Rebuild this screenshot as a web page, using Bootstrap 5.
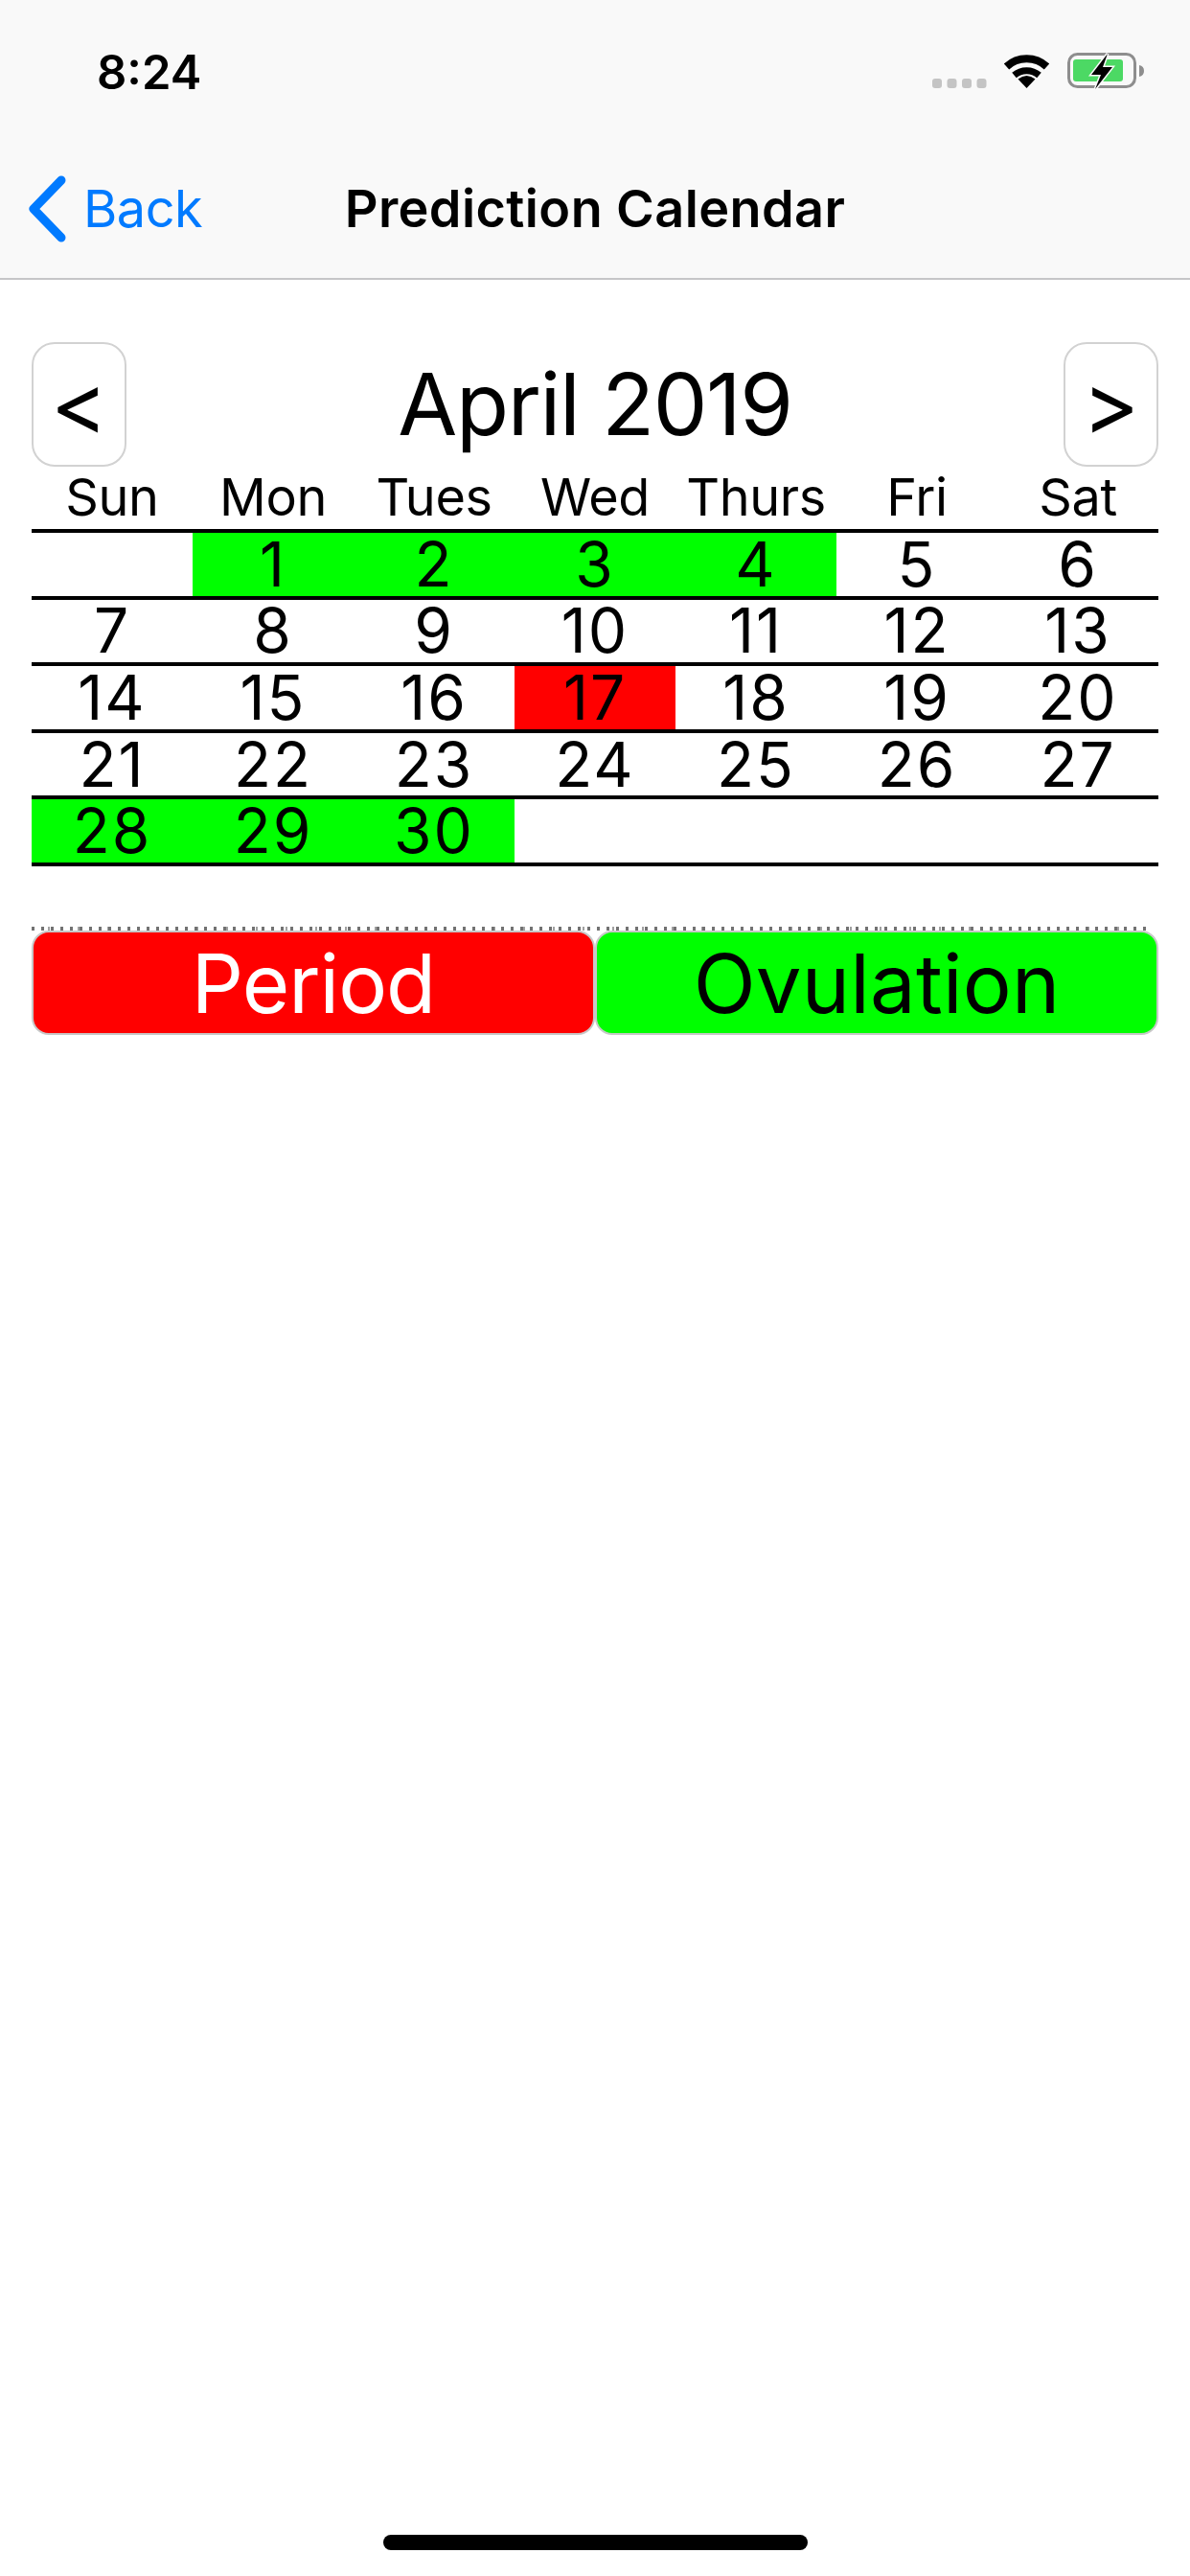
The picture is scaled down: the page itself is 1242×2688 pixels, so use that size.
<!DOCTYPE html>
<html lang="en">
<head>
<meta charset="utf-8">
<title>Prediction Calendar</title>
<link rel="stylesheet" href="https://cdn.jsdelivr.net/npm/bootstrap@5.3.0/dist/css/bootstrap.min.css">
<style>
html, body { background:#fff; }
body { font-family:"Inter","Liberation Sans",sans-serif; color:#000; width:1242px; height:2688px; overflow:hidden; }
.top-bar { background:#f9f9f9; border-bottom:2px solid #c6c6c8; height:292px; }
.status-row { height:132px; padding:0 47px 0 101px; }
.clock { font-size:49px; font-weight:600; line-height:1; margin-top:18px; }
.title-row { height:159px; grid-template-columns:1fr auto 1fr; padding:6px 29px 0; }
.back-link { color:#007aff; font-size:54px; text-decoration:none; line-height:1; gap:17px; letter-spacing:-.5px; margin-top:6px; }
.title-text { font-size:54px; font-weight:600; line-height:1; letter-spacing:.4px; margin:6px 0 0; }
.page-body { padding:65px 33px 0; }
.month-row { height:129px; }
.month-name { font-size:90px; line-height:1; margin:0; letter-spacing:-1.4px; }
.step-btn { width:99px; height:130px; border:2px solid #d2d2d2; border-radius:24px; background:#fff; font-size:90px; line-height:1; color:#000; padding:0 0 2px; }
.cal-grid { width:1176px; table-layout:fixed; border-collapse:collapse; text-align:center; }
.cal-grid th { font-weight:400; font-size:54px; line-height:60px; height:68px; padding:0; border-bottom:4px solid #000; letter-spacing:-.4px; }
.cal-grid td { font-size:64px; line-height:60px; height:69.6px; padding:0; border-bottom:4px solid #000; letter-spacing:2px; }
.fill-green { background:#0f0; }
.fill-red { background:#f00; }
.legend-wrap { margin-top:63px; }
.cut-text { height:4px; margin-right:12px; opacity:.55; background-image:repeating-linear-gradient(90deg,#000 0 3px,transparent 3px 10px),repeating-linear-gradient(90deg,transparent 0 17px,#555 17px 19px,transparent 19px 31px); }
.legend-pill { flex:1 1 0; height:109px; font-size:85px; line-height:1; border-radius:18px; border:2px solid #c8c8c8; padding:3px 0 0; }
.legend-red { background:#f00; color:#fff; letter-spacing:-1px; }
.legend-green { background:#0f0; color:#000; letter-spacing:.2px; }
.home-bar { width:443px; height:16px; background:#000; border-radius:8px; position:absolute; left:400px; top:2645px; }
</style>
</head>
<body>
<header class="top-bar">
  <div class="status-row d-flex justify-content-between align-items-center">
    <span class="clock">8:24</span>
    <svg width="222" height="40" viewBox="0 0 222 40" class="mt-3" aria-label="status icons">
      <g fill="#c4c4c4"><rect x="0" y="28" width="10" height="10" rx="3"/><rect x="15.5" y="28" width="10" height="10" rx="3"/><rect x="31" y="28" width="10" height="10" rx="3"/><rect x="46.5" y="28" width="10" height="10" rx="3"/></g>
      <g transform="translate(74 1)" fill="none" stroke="#000">
        <path d="M3.5 14.5 A31 31 0 0 1 45.5 14.5" stroke-width="8"/>
        <path d="M11.5 23.5 A20 20 0 0 1 37.5 23.5" stroke-width="7"/>
        <path d="M24.5 37 L15.5 27.5 Q24.5 20.5 33.5 27.5 Z" fill="#000" stroke="none"/>
      </g>
      <g transform="translate(141 1)">
        <rect x="1.5" y="1.5" width="69" height="34" rx="9" fill="none" stroke="#8e8e8e" stroke-width="3"/>
        <path d="M75 13 a6 6 0 0 1 5 6 a6 6 0 0 1 -5 6 Z" fill="#8e8e8e"/>
        <rect x="6" y="7" width="52" height="23" rx="3" fill="#4cd964"/>
        <path d="M42 1 L25 23 L35 23 L29 38 L47 15 L37 15 Z" fill="#000" stroke="#f9f9f9" stroke-width="3" stroke-linejoin="miter" paint-order="stroke"/>
      </g>
    </svg>
  </div>
  <div class="title-row d-grid align-items-center">
    <a class="back-link d-inline-flex align-items-center justify-self-start" href="#">
      <svg width="41" height="70" viewBox="0 0 41 70" aria-hidden="true"><path d="M35 5 L6 35 L35 65" fill="none" stroke="#007aff" stroke-width="9" stroke-linecap="round" stroke-linejoin="round"/></svg>
      <span>Back</span>
    </a>
    <h1 class="title-text">Prediction Calendar</h1>
    <span></span>
  </div>
</header>
<main class="page-body">
  <div class="month-row d-flex justify-content-between align-items-center">
    <button type="button" class="step-btn">&lt;</button>
    <h2 class="month-name fw-normal">April 2019</h2>
    <button type="button" class="step-btn">&gt;</button>
  </div>
  <table class="cal-grid">
    <thead><tr><th>Sun</th><th>Mon</th><th>Tues</th><th>Wed</th><th>Thurs</th><th>Fri</th><th>Sat</th></tr></thead>
    <tbody>
      <tr><td></td><td class="fill-green">1</td><td class="fill-green">2</td><td class="fill-green">3</td><td class="fill-green">4</td><td>5</td><td>6</td></tr>
      <tr><td>7</td><td>8</td><td>9</td><td>10</td><td>11</td><td>12</td><td>13</td></tr>
      <tr><td>14</td><td>15</td><td>16</td><td class="fill-red">17</td><td>18</td><td>19</td><td>20</td></tr>
      <tr><td>21</td><td>22</td><td>23</td><td>24</td><td>25</td><td>26</td><td>27</td></tr>
      <tr><td class="fill-green">28</td><td class="fill-green">29</td><td class="fill-green">30</td><td></td><td></td><td></td><td></td></tr>
    </tbody>
  </table>
  <div class="legend-wrap">
    <div class="cut-text" aria-hidden="true"></div>
    <div class="d-flex">
      <button type="button" class="legend-pill legend-red">Period</button>
      <button type="button" class="legend-pill legend-green">Ovulation</button>
    </div>
  </div>
</main>
<div class="home-bar"></div>
<script src="https://cdn.jsdelivr.net/npm/bootstrap@5.3.0/dist/js/bootstrap.bundle.min.js"></script>
</body>
</html>
